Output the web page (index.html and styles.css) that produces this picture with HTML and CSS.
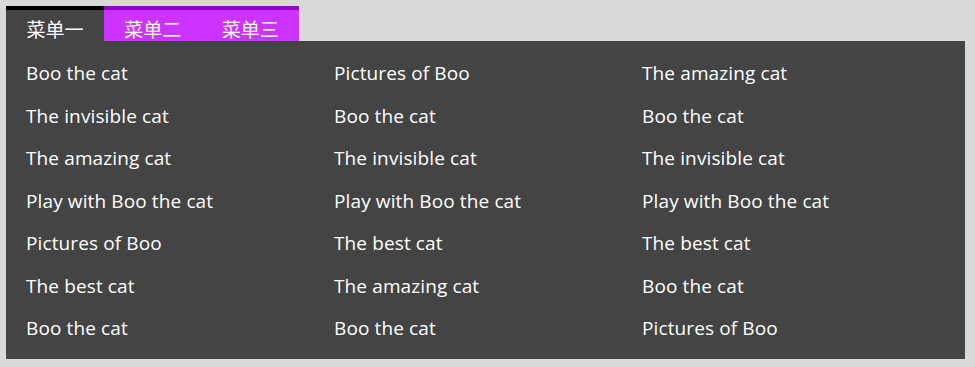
FILE: index.html
```html
<!DOCTYPE html>
<html lang="zh">
<head>
<meta charset="utf-8">
<link rel="stylesheet" href="styles.css">
</head>
<body>
<div class="menu">
  <div class="tabs">
    <div class="tab active">菜单一</div>
    <div class="tab">菜单二</div>
    <div class="tab">菜单三</div>
  </div>
  <div class="panel">
    <div class="item">Boo the cat</div>
    <div class="item">Pictures of Boo</div>
    <div class="item">The amazing cat</div>
    <div class="item">The invisible cat</div>
    <div class="item">Boo the cat</div>
    <div class="item">Boo the cat</div>
    <div class="item">The amazing cat</div>
    <div class="item">The invisible cat</div>
    <div class="item">The invisible cat</div>
    <div class="item">Play with Boo the cat</div>
    <div class="item">Play with Boo the cat</div>
    <div class="item">Play with Boo the cat</div>
    <div class="item">Pictures of Boo</div>
    <div class="item">The best cat</div>
    <div class="item">The best cat</div>
    <div class="item">The best cat</div>
    <div class="item">The amazing cat</div>
    <div class="item">Boo the cat</div>
    <div class="item">Boo the cat</div>
    <div class="item">Boo the cat</div>
    <div class="item">Pictures of Boo</div>
  </div>
</div>
</body>
</html>
```
FILE: styles.css
```css
html, body {
  margin: 0;
  padding: 0;
  background: #d9d9d9;
}
body {
  padding: 6px;
  font-family: "Open Sans", "Noto Sans CJK SC", sans-serif;
}
.menu {
  width: 959px;
}
.tabs {
  display: flex;
}
.tab {
  width: 98px;
  height: 25px;
  padding-top: 6px;
  border-top: 4px solid #9900cc;
  background: #cc33ff;
  color: #fff;
  font-family: "Noto Sans CJK SC", sans-serif;
  font-size: 19px;
  line-height: 25px;
  text-align: center;
}
.tab + .tab {
  width: 97.5px;
}
.tab.active {
  background: #444444;
  border-top-color: #000;
}
.panel {
  background: #444444;
  padding: 11px 0 9px 20px;
  display: grid;
  grid-template-columns: 308px 308px 308px;
  grid-auto-rows: 42.5px;
}
.item {
  color: #fff;
  font-size: 19px;
  letter-spacing: 0.12px;
  line-height: 42.5px;
  white-space: nowrap;
}
```
